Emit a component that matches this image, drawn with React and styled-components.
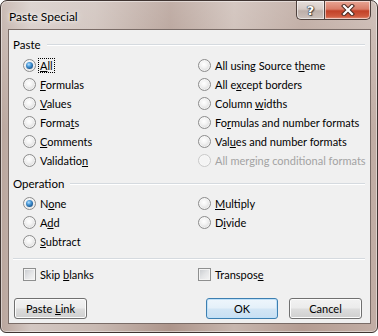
import React from "react";
import styled, { createGlobalStyle, css } from "styled-components";

const Global = createGlobalStyle`
  html, body { margin: 0; padding: 0; background: #ffffff; }
  body { font-family: Lato, "Noto Sans", "Liberation Sans", sans-serif; font-size: 11px; color: #000; }
  * { box-sizing: border-box; }
`;

const Window = styled.div`
  width: 378px;
  height: 333px;
  border: 1px solid #3f3431;
  border-radius: 7px 7px 6px 6px;
  background:
    linear-gradient(180deg, rgba(255,255,255,0.25) 0%, rgba(255,255,255,0) 40%),
    linear-gradient(90deg, #b9a59c 0%, #d3c7c2 8%, #c9bab3 25%, #ad958b 45%, #c7b6ae 62%, #b49c92 80%, #c2aea5 100%);
  box-shadow: inset 0 0 0 1px rgba(255,255,255,0.45);
  display: flex;
  flex-direction: column;
  overflow: hidden;
`;

const TitleBar = styled.div`
  height: 28px;
  display: flex;
  justify-content: space-between;
  align-items: flex-start;
  padding-left: 8px;
  padding-right: 6px;
`;

const TitleText = styled.div`
  align-self: center;
  margin-top: 2px;
  font-size: 12px;
  color: #000;
  text-shadow: 0 0 6px rgba(255,255,255,0.9), 0 0 3px rgba(255,255,255,0.9);
`;

const CaptionButtons = styled.div`
  display: flex;
`;

const CaptionButton = styled.div`
  height: 19px;
  display: flex;
  align-items: center;
  justify-content: center;
  border: 1px solid #4e403c;
  border-top: none;
  box-shadow: inset 0 0 0 1px rgba(255,255,255,0.55);
  ${(p) =>
    p.$close
      ? css`
          width: 47px;
          border-radius: 0 0 5px 0;
          background: linear-gradient(180deg, #e8a695 0%, #d97d68 45%, #c24128 55%, #cf5a3e 85%, #e3927c 100%);
        `
      : css`
          width: 28px;
          border-right: none;
          border-radius: 0 0 0 5px;
          background: linear-gradient(180deg, rgba(255,255,255,0.55) 0%, rgba(230,225,222,0.5) 45%, rgba(180,170,166,0.5) 55%, rgba(210,202,198,0.6) 100%);
        `}
`;

const Help = styled.span`
  font-family: "DejaVu Sans", sans-serif;
  font-weight: bold;
  font-size: 13px;
  color: #fff;
  line-height: 1;
  text-shadow: 0 0 1px #333, 0 0 1px #333, 0 0 1px #333, 1px 1px 1px #555;
`;

const Client = styled.div`
  flex: 1;
  margin: 0 6px 8px 7px;
  border: 1px solid #7a6c67;
  background: #f0f0f0;
  padding: 6px 5px 0 4px;
  display: flex;
  flex-direction: column;
`;

const GroupHeader = styled.div`
  display: flex;
  align-items: center;
  height: 16px;
  gap: 6px;
  font-size: 11.5px;
  margin-top: ${(p) => p.$top || 0}px;
  &::after {
    content: "";
    flex: 1;
    height: 1px;
    background: #d5dadf;
    box-shadow: 0 1px 0 #ffffff;
    margin-top: 1px;
  }
`;

const OptionGrid = styled.div`
  display: grid;
  grid-template-columns: 175px 1fr;
  grid-auto-flow: column;
  grid-template-rows: repeat(${(p) => p.$rows}, 19px);
  padding-left: 10px;
  margin-top: ${(p) => p.$top || 0}px;
`;

const Item = styled.div`
  display: flex;
  align-items: center;
  gap: 4px;
  color: ${(p) => (p.$disabled ? "#a3a3a3" : "#000")};
  white-space: nowrap;
`;

const Label = styled.span`
  white-space: nowrap;
  ${(p) =>
    p.$focus &&
    css`
      outline: 1px dotted #000;
      padding: 0 1px;
      margin-left: -1px;
    `}
`;

const Radio = styled.span`
  position: relative;
  width: 13px;
  height: 13px;
  flex: none;
  border-radius: 50%;
  border: 1px solid ${(p) => (p.$disabled ? "#c9c9c9" : "#8c8c8c")};
  background: ${(p) =>
    p.$disabled
      ? "#f4f4f4"
      : "radial-gradient(circle at 45% 40%, #ffffff 0%, #f3f3f3 35%, #d4d4d4 85%, #cdcdcd 100%)"};
  box-shadow: inset 0 0 0 1px ${(p) => (p.$disabled ? "#f7f7f7" : "rgba(255,255,255,0.6)")};
  ${(p) =>
    p.$checked &&
    css`
      &::after {
        content: "";
        position: absolute;
        left: 2px;
        top: 2px;
        width: 7px;
        height: 7px;
        border-radius: 50%;
        background: radial-gradient(circle at 40% 35%, #b6e1ff 0%, #4c9ad8 35%, #1b5d99 70%, #0d3a66 100%);
      }
    `}
`;

const Check = styled.span`
  width: 13px;
  height: 13px;
  flex: none;
  border: 1px solid #8e8f8f;
  background: linear-gradient(135deg, #c6c9cd 0%, #e3e4e6 50%, #f6f6f6 100%);
  box-shadow: inset 0 0 0 1px #f4f4f4;
`;

const Separator = styled.div`
  height: 1px;
  background: #d5dadf;
  box-shadow: 0 1px 0 #ffffff;
  margin: 7px 0 0 0;
`;

const ButtonRow = styled.div`
  display: flex;
  justify-content: space-between;
  margin-top: 14px;
  padding: 0 3px 0 1px;
`;

const ButtonGroup = styled.div`
  display: flex;
  gap: 11px;
`;

const Button = styled.div`
  width: ${(p) => p.$w || 73}px;
  height: 21px;
  border-radius: 3px;
  display: flex;
  align-items: center;
  justify-content: center;
  color: #000;
  ${(p) =>
    p.$default
      ? css`
          border: 1px solid #3c7fb1;
          background: linear-gradient(180deg, #eef6fc 0%, #e4f0f9 48%, #d3e6f5 52%, #c8dff2 100%);
          box-shadow: inset 0 0 0 1px #c1e1f8;
        `
      : css`
          border: 1px solid #707070;
          background: linear-gradient(180deg, #f2f2f2 0%, #ebebeb 48%, #dddddd 52%, #cfcfcf 100%);
          box-shadow: inset 0 0 0 1px #fcfcfc;
        `}
`;

const Accel = ({ text, at, focus }) => (
  <Label $focus={focus}>
    {at == null ? (
      text
    ) : (
      <>
        {text.slice(0, at)}
        <u>{text[at]}</u>
        {text.slice(at + 1)}
      </>
    )}
  </Label>
);

const RadioItem = ({ label, at, checked, disabled, focus }) => (
  <Item $disabled={disabled}>
    <Radio $checked={checked} $disabled={disabled} />
    <Accel text={label} at={at} focus={focus} />
  </Item>
);

const paste = [
  { label: "All", at: 0, checked: true, focus: true },
  { label: "Formulas", at: 0 },
  { label: "Values", at: 0 },
  { label: "Formats", at: 5 },
  { label: "Comments", at: 0 },
  { label: "Validation", at: 9 },
  { label: "All using Source theme", at: 18 },
  { label: "All except borders", at: 5 },
  { label: "Column widths", at: 7 },
  { label: "Formulas and number formats", at: 2 },
  { label: "Values and number formats", at: 3 },
  { label: "All merging conditional formats", disabled: true },
];

const ops = [
  { label: "None", at: 1, checked: true },
  { label: "Add", at: 1 },
  { label: "Subtract", at: 0 },
  { label: "Multiply", at: 0 },
  { label: "Divide", at: 1 },
];

export default function App() {
  return (
    <>
      <Global />
      <Window>
        <TitleBar>
          <TitleText>Paste Special</TitleText>
          <CaptionButtons>
            <CaptionButton>
              <Help>?</Help>
            </CaptionButton>
            <CaptionButton $close>
              <svg width="14" height="12" viewBox="0 0 14 12">
                <path d="M3 2 L11 10 M11 2 L3 10" stroke="#4a2a22" strokeWidth="4.2" strokeLinecap="square" />
                <path d="M3 2 L11 10 M11 2 L3 10" stroke="#ffffff" strokeWidth="2.2" strokeLinecap="square" />
              </svg>
            </CaptionButton>
          </CaptionButtons>
        </TitleBar>
        <Client>
          <GroupHeader>Paste</GroupHeader>
          <OptionGrid $rows={6} $top={4}>
            {paste.map((o) => (
              <RadioItem key={o.label} {...o} />
            ))}
          </OptionGrid>
          <GroupHeader $top={5}>Operation</GroupHeader>
          <OptionGrid $rows={3} $top={3}>
            {ops.map((o) => (
              <RadioItem key={o.label} {...o} />
            ))}
          </OptionGrid>
          <Separator />
          <OptionGrid $rows={1} $top={6}>
            <Item>
              <Check />
              <Accel text="Skip blanks" at={5} />
            </Item>
            <Item>
              <Check />
              <Accel text="Transpose" at={8} />
            </Item>
          </OptionGrid>
          <ButtonRow>
            <Button>
              <Accel text="Paste Link" at={6} />
            </Button>
            <ButtonGroup>
              <Button $default $w={72}>OK</Button>
              <Button>Cancel</Button>
            </ButtonGroup>
          </ButtonRow>
        </Client>
      </Window>
    </>
  );
}
